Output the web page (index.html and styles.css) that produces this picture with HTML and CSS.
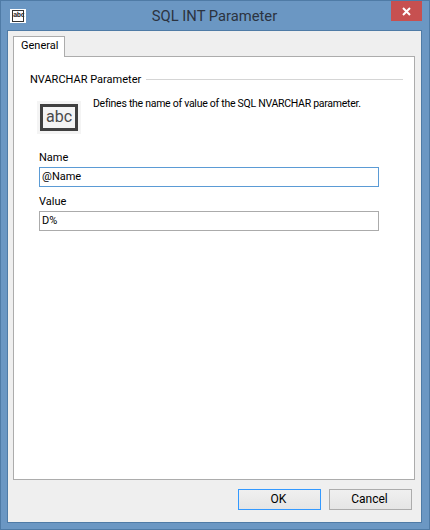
FILE: index.html
```html
<!DOCTYPE html>
<html lang="en">
<head>
  <meta charset="UTF-8">
  <title>SQL INT Parameter</title>
  <link rel="stylesheet" href="styles.css">
</head>
<body>
  <div class="window">
    <div class="titlebar">
      <div class="app-icon"><span>abc</span></div>
      <div class="title">SQL INT Parameter</div>
      <div class="close">
        <svg width="9" height="9" viewBox="0 0 9 9"><path d="M1 1L8 8M8 1L1 8" stroke="#fff" stroke-width="2" fill="none"/></svg>
      </div>
    </div>

    <div class="client">
      <div class="tabs">
        <div class="tab">General</div>
      </div>

      <div class="panel">
        <div class="group-head">
          <span>NVARCHAR Parameter</span>
          <div class="rule"></div>
        </div>

        <div class="intro">
          <div class="big-icon"><div class="big-icon-box">abc</div></div>
          <p>Defines the name of value of the SQL NVARCHAR parameter.</p>
        </div>

        <div class="field">
          <label>Name</label>
          <div class="input focused">@Name</div>
        </div>
        <div class="field">
          <label>Value</label>
          <div class="input">D%</div>
        </div>
      </div>

      <div class="buttons">
        <div class="button default">OK</div>
        <div class="button">Cancel</div>
      </div>
    </div>
  </div>
</body>
</html>
```

FILE: styles.css
```css
* {
  margin: 0;
  padding: 0;
  box-sizing: border-box;
}

body {
  width: 430px;
  height: 530px;
  overflow: hidden;
  font-family: 'Roboto', 'Liberation Sans', sans-serif;
  font-size: 11px;
  color: #000;
}

.window {
  width: 430px;
  height: 530px;
  background: #6b97c3;
  border: 1px solid #4f7ba6;
  padding: 0 7px 6px 6px;
  display: flex;
  flex-direction: column;
}

.titlebar {
  height: 29px;
  flex: none;
  display: flex;
  align-items: flex-start;
  position: relative;
}

.app-icon {
  width: 16px;
  height: 14px;
  margin: 8px 0 0 3px;
  background: #fff;
  padding: 1px 2px;
}

.app-icon span {
  display: block;
  height: 12px;
  border: 1px solid #333;
  font-family: 'DejaVu Sans Mono', monospace;
  font-size: 7px;
  line-height: 9px;
  font-weight: bold;
  text-align: center;
  letter-spacing: -0.5px;
  color: #333;
}

.title {
  position: absolute;
  left: 0;
  right: 0;
  top: 5px;
  text-align: center;
  font-size: 14.75px;
  line-height: 20px;
  color: #2b3340;
}

.close {
  position: absolute;
  right: 0;
  top: 0;
  width: 31px;
  height: 20px;
  background: #c75050;
  display: flex;
  align-items: center;
  justify-content: center;
}

.client {
  flex: 1;
  background: #efefef;
  border: 1px solid #4f7ba6;
  padding: 5px 6px 0 5px;
  display: flex;
  flex-direction: column;
}

.tabs {
  display: flex;
  height: 20px;
  flex: none;
  position: relative;
  z-index: 1;
}

.tab {
  width: 52px;
  height: 21px;
  background: #fff;
  border: 1px solid #acacac;
  border-bottom: none;
  line-height: 18px;
  padding-left: 7px;
}

.panel {
  width: 402px;
  height: 424px;
  flex: none;
  background: #fff;
  border: 1px solid #acacac;
  padding: 14px 11px 0 16px;
}

.group-head {
  display: flex;
  align-items: center;
  gap: 5px;
  height: 17px;
}

.rule {
  flex: 1;
  height: 1px;
  background: #d5d5d5;
}

.intro {
  display: flex;
  gap: 12px;
  margin: 7px 0 0 7px;
  height: 53px;
}

.big-icon {
  width: 44px;
  height: 33px;
  background: #f4f4f4;
  flex: none;
  margin-top: 6px;
  padding: 3px;
}

.big-icon-box {
  width: 38px;
  height: 27px;
  border: 3px solid #404040;
  font-size: 16px;
  line-height: 20px;
  text-align: center;
  color: #4a4a4a;
  background: #f4f4f4;
}

.intro p {
  font-size: 10.5px;
  letter-spacing: -0.27px;
  line-height: 16px;
  padding-top: 1px;
}

.field {
  margin-left: 9px;
  width: 340px;
  margin-bottom: 5px;
}

.field label {
  display: block;
  height: 19px;
  padding-top: 1px;
  line-height: 18px;
}

.input {
  height: 20px;
  border: 1px solid #ababab;
  line-height: 18px;
  padding-left: 2px;
}

.input.focused {
  border-color: #5b9bd5;
}

.buttons {
  display: flex;
  justify-content: flex-end;
  gap: 8px;
  padding: 9px 3px 0 0;
}

.button {
  width: 83px;
  height: 21px;
  border: 1px solid #acacac;
  background: linear-gradient(#f0f0f0, #e5e5e5);
  font-size: 12px;
  text-align: center;
  line-height: 19px;
  padding-right: 2px;
}

.button.default {
  border-color: #3399ff;
}
```
